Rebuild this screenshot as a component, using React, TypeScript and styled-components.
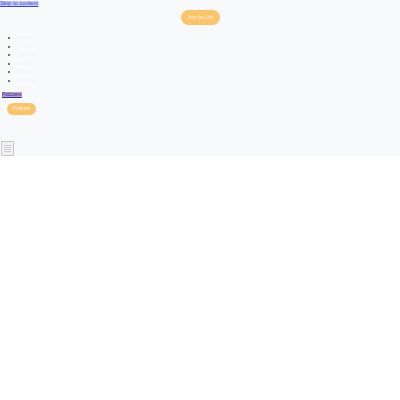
import React from "react";
import styled, { createGlobalStyle } from "styled-components";

const Global = createGlobalStyle`
  html, body { margin: 0; padding: 0; background: #ffffff; }
  body { font-family: "Liberation Sans", Arial, sans-serif; }
`;

const Header = styled.header`
  background: #f8f9fb;
  height: 156px;
  position: relative;
  font-size: 5.5px;
`;

const SkipLink = styled.a`
  display: inline-block;
  background: #c9cdf7;
  color: #3a47d6;
  font-size: 5.8px;
  line-height: 5px;
  text-decoration: underline;
`;

const CtaRow = styled.div`
  display: flex;
  justify-content: center;
  padding-top: 4px;
  margin-left: 1px;
`;

const Pill = styled.a<{ $w: number; $h: number }>`
  display: inline-flex;
  align-items: center;
  justify-content: center;
  width: ${(p) => p.$w}px;
  height: ${(p) => p.$h}px;
  border-radius: 8px;
  background: #f8c46c;
  color: #fff3df;
  font-size: 4.8px;
  text-decoration: none;
`;

const NavList = styled.ul`
  margin: 8px 0 0;
  padding: 0 0 0 18px;
  list-style: square;
`;

const NavItem = styled.li`
  height: 8.6px;
  font-size: 5px;
  line-height: 8.6px;
  color: #f5f6f9;
  &::marker { color: #707080; font-size: 6px; }
`;

const PodcastTag = styled.a`
  display: inline-block;
  margin: 7px 0 0 2px;
  background: linear-gradient(90deg, #a99ce8, #c8a8d8);
  color: #3b2a78;
  font-size: 4.8px;
  line-height: 5px;
  text-decoration: underline;
`;

const SecondRow = styled.div`
  padding: 6px 0 0 7px;
`;

const MenuToggle = styled.button`
  position: absolute;
  left: 1px;
  top: 141px;
  width: 13px;
  height: 15px;
  padding: 2px;
  border: 1px solid #c8c8cc;
  background: #f1f1f3;
  display: flex;
  flex-direction: column;
  justify-content: space-evenly;
  box-sizing: border-box;
`;

const Bar = styled.span`
  display: block;
  height: 1px;
  background: #cfcfd4;
`;

const items = ["Home", "About", "Episodes", "Guests", "Blog", "Contact"];

export default function App() {
  return (
    <>
      <Global />
      <Header>
        <SkipLink href="#content">Skip to content</SkipLink>
        <CtaRow>
          <Pill href="#" $w={39} $h={15}>Join the List</Pill>
        </CtaRow>
        <NavList>
          {items.map((t) => (
            <NavItem key={t}>{t}</NavItem>
          ))}
        </NavList>
        <PodcastTag href="#">Podcasts</PodcastTag>
        <SecondRow>
          <Pill href="#" $w={29} $h={12}>Podcast</Pill>
        </SecondRow>
        <MenuToggle aria-label="Menu">
          <Bar />
          <Bar />
          <Bar />
          <Bar />
        </MenuToggle>
      </Header>
    </>
  );
}
